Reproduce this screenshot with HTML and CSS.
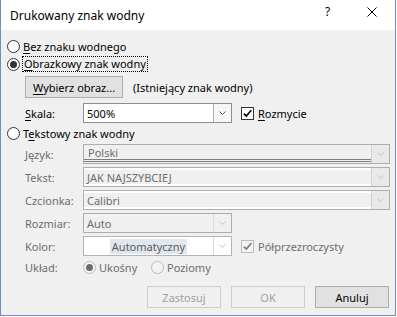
FILE: index.html
```html
<!DOCTYPE html>
<html lang="pl">
<head>
<meta charset="utf-8">
<title>Drukowany znak wodny</title>
<link rel="stylesheet" href="styles.css">
</head>
<body>
<div class="window">
  <div class="titlebar">
    <span class="title">Drukowany znak wodny</span>
    <span class="tbtn help">?</span>
    <span class="tbtn close"><svg width="10" height="10" viewBox="0 0 10 10"><path d="M0.5 0.5L9.5 9.5M9.5 0.5L0.5 9.5" stroke="#000" stroke-width="1" fill="none"/></svg></span>
  </div>
  <div class="content">
    <div class="radio-row"><span class="radio"></span><span class="rtext"><u>B</u>ez znaku wodnego</span></div>
    <div class="radio-row"><span class="radio checked"></span><span class="rtext focus"><u>O</u>brazkowy znak wodny</span></div>
    <div class="pic-row">
      <button class="btn pick"><u>W</u>ybierz obraz...</button>
      <span class="note">(Istniejący znak wodny)</span>
    </div>
    <div class="scale-row">
      <span class="lbl"><u>S</u>kala:</span>
      <div class="combo en short">
        <span class="val">500%</span>
        <span class="drop en-drop"><svg width="7" height="4" viewBox="0 0 7 4"><path d="M0.5 0.5L3.5 3.5L6.5 0.5" stroke="#5a5a5a" fill="none"/></svg></span>
      </div>
      <span class="check on"><svg width="11" height="11" viewBox="0 0 11 11"><path d="M1.8 5.6L4.3 8.1L9.3 2.3" stroke="#000" stroke-width="1.7" fill="none"/></svg></span>
      <span class="ctext"><u>R</u>ozmycie</span>
    </div>
    <div class="radio-row third"><span class="radio"></span><span class="rtext">T<u>e</u>kstowy znak wodny</span></div>

    <div class="form">
      <span class="flbl">Język:</span>
      <div class="combo dis">
        <span class="val dbl">Polski</span>
        <span class="drop box"><svg width="7" height="4" viewBox="0 0 7 4"><path d="M0.5 0.5L3.5 3.5L6.5 0.5" stroke="#c2c2c2" fill="none"/></svg></span>
      </div>

      <span class="flbl">Tekst:</span>
      <div class="combo dis">
        <span class="val hi">JAK NAJSZYBCIEJ</span>
        <span class="drop box"><svg width="7" height="4" viewBox="0 0 7 4"><path d="M0.5 0.5L3.5 3.5L6.5 0.5" stroke="#c2c2c2" fill="none"/></svg></span>
      </div>

      <span class="flbl">Czcionka:</span>
      <div class="combo dis">
        <span class="val hi">Calibri</span>
        <span class="drop box"><svg width="7" height="4" viewBox="0 0 7 4"><path d="M0.5 0.5L3.5 3.5L6.5 0.5" stroke="#c2c2c2" fill="none"/></svg></span>
      </div>

      <span class="flbl">Rozmiar:</span>
      <div class="cell">
        <div class="combo dis short">
          <span class="val">Auto</span>
          <span class="drop sep"><svg width="7" height="4" viewBox="0 0 7 4"><path d="M0.5 0.5L3.5 3.5L6.5 0.5" stroke="#c2c2c2" fill="none"/></svg></span>
        </div>
      </div>

      <span class="flbl">Kolor:</span>
      <div class="cell">
        <div class="combo white short">
          <span class="val center"><span class="sel">Automatyczny</span></span>
          <span class="drop sep"><svg width="7" height="4" viewBox="0 0 7 4"><path d="M0.5 0.5L3.5 3.5L6.5 0.5" stroke="#c2c2c2" fill="none"/></svg></span>
        </div>
        <span class="check off"><svg width="11" height="11" viewBox="0 0 11 11"><path d="M1.8 5.6L4.3 8.1L9.3 2.3" stroke="#7a7a7a" stroke-width="1.7" fill="none"/></svg></span>
        <span class="ctext gray">Półprzezroczysty</span>
      </div>

      <span class="flbl">Układ:</span>
      <div class="cell">
        <span class="ropt first"><span class="radio dis checked"></span><span class="rtext gray">Ukośny</span></span>
        <span class="ropt"><span class="radio dis"></span><span class="rtext gray">Poziomy</span></span>
      </div>
    </div>

    <div class="buttons">
      <button class="btn act disabled">Zastosuj</button>
      <button class="btn act disabled">OK</button>
      <button class="btn act">Anuluj</button>
    </div>
  </div>
</div>
</body>
</html>
```

FILE: styles.css
```css
* { box-sizing: border-box; }
html, body { margin: 0; padding: 0; }
body {
  width: 397px;
  height: 317px;
  background: #ffffff;
  font-family: "Noto Sans", "DejaVu Sans", sans-serif;
  font-size: 11px;
  line-height: 1;
  color: #000;
  overflow: hidden;
}
u { text-decoration: underline; text-underline-offset: 2px; }

.window {
  width: 396px;
  height: 316px;
  border: 1px solid #6e8fc6;
  border-top: none;
  background: #f0f0f0;
  display: flex;
  flex-direction: column;
}
.titlebar {
  height: 30px;
  background: #ffffff;
  display: flex;
  align-items: flex-start;
  flex: none;
}
.title {
  flex: 1;
  padding-left: 9px;
  line-height: 32px;
  font-size: 12px;
  color: #000;
}
.tbtn {
  width: 46px;
  height: 23px;
  display: flex;
  align-items: center;
  justify-content: center;
}
.help { font-size: 12px; padding-left: 3px; }

.content {
  flex: 1;
  padding: 7px 5px 0 6px;
  display: flex;
  flex-direction: column;
}

.radio-row {
  height: 18px;
  display: flex;
  align-items: center;
  gap: 3px;
}
.radio-row.third { margin-top: 1px; }
.radio {
  width: 13px;
  height: 13px;
  border-radius: 50%;
  border: 1px solid #333333;
  background: #ffffff;
  display: flex;
  align-items: center;
  justify-content: center;
  flex: none;
}
.radio.checked::before {
  content: "";
  width: 7px;
  height: 7px;
  border-radius: 50%;
  background: #333333;
}
.radio.dis { border-color: #bcbcbc; background: #f4f4f4; }
.radio.dis.checked::before { background: #6d6d6d; }
.rtext { white-space: nowrap; }
.focus {
  margin-left: -1px;
  padding: 1px 1px 2px 1px;
  outline: 1px dotted #000;
  outline-offset: -1px;
  border: 1px solid transparent;
}

.pic-row {
  margin-top: 3px;
  margin-left: 18px;
  height: 22px;
  display: flex;
  align-items: center;
}
.btn {
  height: 22px;
  border: 1px solid #adadad;
  background: #e1e1e1;
  font-family: inherit;
  font-size: 11px;
  color: #000;
  padding: 0;
  margin: 0;
  display: flex;
  align-items: center;
  justify-content: center;
  flex: none;
}
.btn.pick { width: 98px; }
.note { margin-left: 10px; white-space: nowrap; }

.scale-row {
  margin-top: 5px;
  margin-left: 18px;
  height: 20px;
  display: flex;
  align-items: center;
}
.lbl { width: 58px; flex: none; }

.combo {
  height: 20px;
  display: flex;
  align-items: stretch;
  border: 1px solid #adadad;
  background: #f0f0f0;
}
.combo.short { width: 149px; flex: none; }
.combo.en { border-color: #8f8f8f; background: #ffffff; }
.combo.white { background: #ffffff; border-color: #b4b4b4; }
.val {
  flex: 1;
  display: flex;
  align-items: center;
  padding-left: 3px;
  white-space: nowrap;
  overflow: hidden;
}
.dis .val { color: #6d6d6d; }
.val.dbl {
  height: 17px;
  border-bottom: 3px double #7f7f7f;
  padding-left: 4px;
}
.val.hi {
  box-shadow: inset 0 2px 0 #ffffff, inset 0 -2px 0 #ffffff;
}
.val.center { justify-content: center; padding-left: 0; color: #5a5a5a; }
.sel { background: #e1e7ef; padding: 2px 2px; }

.drop {
  width: 18px;
  flex: none;
  display: flex;
  align-items: center;
  justify-content: center;
}
.drop.en-drop { border-left: 1px solid #adadad; background: #f6f6f6; }
.drop.box { border-left: 1px solid #d2d2d2; background: #e9e9e9; }
.drop.sep { border-left: 1px solid #dadada; }

.check {
  width: 13px;
  height: 13px;
  flex: none;
  margin-left: 9px;
  border: 1px solid #333333;
  background: #ffffff;
  display: flex;
  align-items: center;
  justify-content: center;
}
.check.off { border-color: #bcbcbc; background: #f4f4f4; }
.ctext { margin-left: 4px; white-space: nowrap; }
.gray { color: #6d6d6d; }

.form {
  margin-top: 2px;
  margin-left: 18px;
  display: grid;
  grid-template-columns: 58px 1fr;
  grid-template-rows: repeat(5, 20px) 16px;
  row-gap: 3px;
}
.flbl {
  color: #6d6d6d;
  align-self: center;
  white-space: nowrap;
}
.cell {
  display: flex;
  align-items: center;
}
.ropt {
  display: flex;
  align-items: center;
  gap: 3px;
}
.ropt.first { width: 68px; }

.buttons {
  margin-top: 11px;
  display: flex;
  justify-content: flex-end;
  gap: 10px;
  padding-right: 1px;
}
.btn.act { width: 74px; }
.btn.disabled {
  border-color: #cccccc;
  background: #f0f0f0;
  color: #a0a0a0;
}
```
